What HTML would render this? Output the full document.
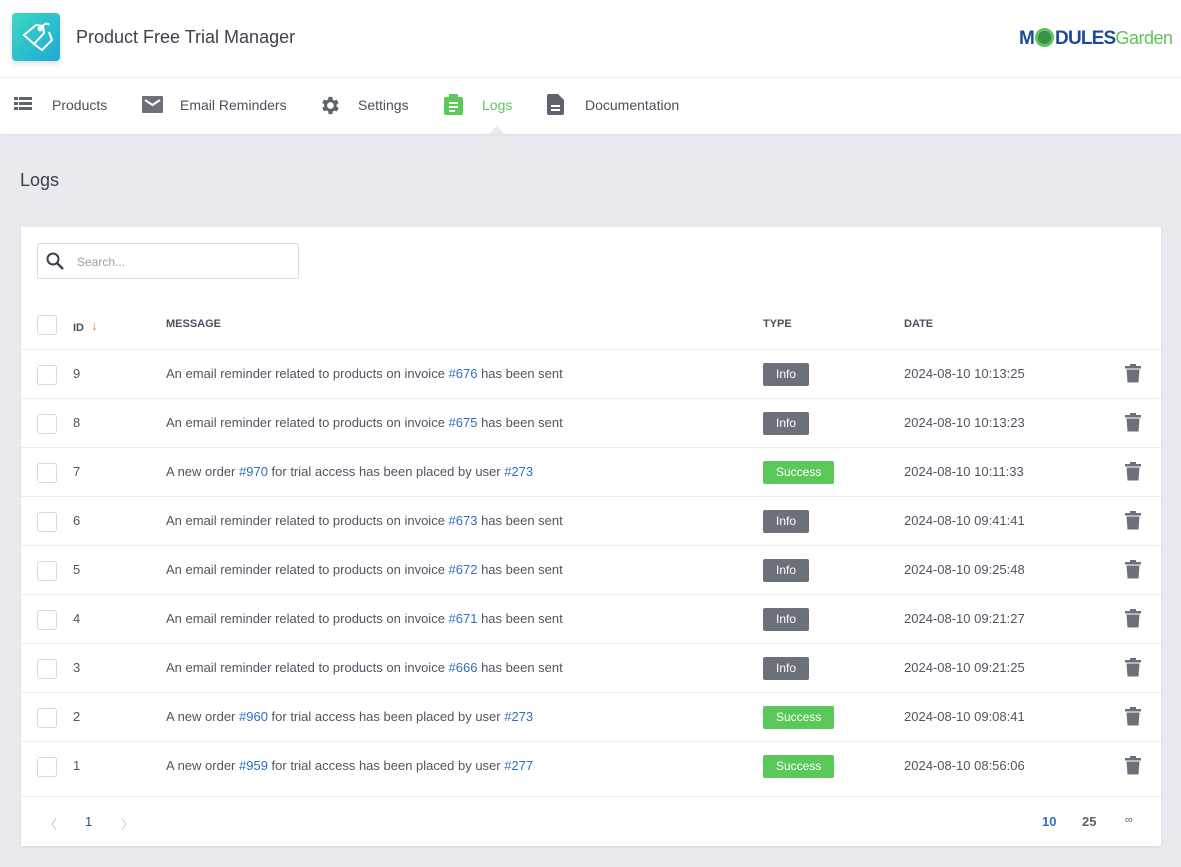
<!DOCTYPE html>
<html><head><meta charset="utf-8"><style>
*{box-sizing:border-box;margin:0;padding:0}
body{width:1181px;height:867px;background:#e9eaef;font-family:"Liberation Sans",sans-serif;color:#505561;overflow:hidden;position:relative}
.top{position:absolute;left:0;top:0;width:1181px;height:78px;background:#fff;border-bottom:1px solid #eceef2}
.logo{position:absolute;left:12px;top:13px;width:48px;height:48px;border-radius:4px;background:linear-gradient(135deg,#3fd7c0,#1ea9d8);box-shadow:0 2px 6px rgba(0,0,0,.15)}
.title{position:absolute;left:76px;top:27px;font-size:18px;color:#3d414b}
.mg{position:absolute;left:1019px;top:27px;font-size:19px;font-weight:bold;color:#1d4b9a;letter-spacing:-0.8px;white-space:nowrap;line-height:22px}
.mg span.g{font-weight:normal;color:#5fc35a;font-size:18px;letter-spacing:-0.5px}
.nav{position:absolute;left:0;top:78px;width:1181px;height:56px;background:#fff;box-shadow:0 1px 3px rgba(0,0,0,.06)}
.ni{position:absolute;top:19px;font-size:14px;color:#4c505b;white-space:nowrap}
.ni svg{position:absolute;top:-1px}
.caret{position:absolute;left:489px;top:126px;width:0;height:0;border-left:8px solid transparent;border-right:8px solid transparent;border-bottom:8px solid #e9eaef}
h2{position:absolute;left:20px;top:170px;font-size:18px;font-weight:normal;color:#3d414b}
.card{position:absolute;left:21px;top:227px;width:1140px;height:619px;background:#fff;box-shadow:0 1px 3px rgba(0,0,0,.08)}
.search{position:absolute;left:16px;top:16px;width:262px;height:36px;border:1px solid #d8dbe1;border-radius:2px}
.search span{position:absolute;left:39px;top:11px;font-size:12px;color:#9a9ea8}
.row{position:absolute;left:0;width:1140px;height:49px;border-top:1px solid #eceef2;font-size:13px}
.row>*{position:absolute}
.cb{left:16px;top:15px;width:20px;height:20px;border:1px solid #d6d9df;border-radius:3px;background:#fff}
.id{left:52px;top:16px}
.msg{left:145px;top:16px}
.msg a{color:#2f6ec5;text-decoration:none}
.bd{left:742px;top:13px;height:23px;line-height:23px;border-radius:2px;color:#fff;font-size:12px;padding:0 13px}
.info{background:#6c7079}
.succ{background:#5bc85a}
.dt{left:883px;top:16px}
.tr{left:1104px;top:14px}
.hd{font-size:11px;font-weight:bold;color:#4c505b}
.foot{position:absolute;left:0;top:569px;width:1140px;height:50px;border-top:1px solid #eceef2;font-size:13px}
.foot span{position:absolute;top:17px}
</style></head><body>
<div class="top">
<div class="logo"><svg width="48" height="48" viewBox="0 0 48 48"><g fill="none" stroke="#fff" stroke-width="2"><path d="M12 22 L24 12 L31 13 L32 20 L22 31 Z"/><path d="M22 31 L30 37 L40 27 L37 19"/><circle cx="28" cy="16" r="1.5"/><path d="M28 16 Q34 8 37 12"/></g></svg></div>
<div class="title">Product Free Trial Manager</div>
<div class="mg">M<span style="display:inline-block;width:19px;height:19px;border:3px solid #5fc35a;border-radius:50%;vertical-align:-3px;background:#3a8f4b;margin:0 1px"></span>DULES<span class="g">Garden</span></div>
</div>
<div class="nav">
<div class="ni" style="left:52px"><svg style="left:-38px" width="18" height="16" viewBox="0 0 18 16" fill="#5f636d"><rect x="0" y="1" width="4" height="3"/><rect x="5" y="1" width="13" height="3"/><rect x="0" y="6" width="4" height="3"/><rect x="5" y="6" width="13" height="3"/><rect x="0" y="11" width="4" height="3"/><rect x="5" y="11" width="13" height="3"/></svg>Products</div>
<div class="ni" style="left:180px"><svg style="left:-38px" width="21" height="17" viewBox="0 0 21 17"><rect width="21" height="17" rx="1" fill="#6c7079"/><path d="M3 4 L10.5 9 L18 4" stroke="#fff" stroke-width="2" fill="none"/></svg>Email Reminders</div>
<div class="ni" style="left:358px"><svg style="left:-40px;top:-3px" width="23" height="23" viewBox="0 0 24 24" fill="#5f636d"><path d="M19.4 13a7.5 7.5 0 000-2l2.1-1.6-2-3.5-2.5 1a7.3 7.3 0 00-1.7-1L15 3h-4l-.4 2.7a7.3 7.3 0 00-1.7 1l-2.5-1-2 3.5L6.6 11a7.5 7.5 0 000 2l-2.1 1.6 2 3.5 2.5-1a7.3 7.3 0 001.7 1L11 21h4l.4-2.7a7.3 7.3 0 001.7-1l2.5 1 2-3.5zM13 15.5a3.5 3.5 0 110-7 3.5 3.5 0 010 7z"/></svg>Settings</div>
<div class="ni" style="left:482px;color:#5bc85a"><svg style="left:-38px;top:-3px" width="19" height="21" viewBox="0 0 19 21"><rect x="0" y="3" width="19" height="18" rx="2" fill="#5bc85a"/><rect x="5" y="0" width="9" height="5" rx="1" fill="#5bc85a"/><path d="M5 9h9M5 13h9M5 17h6" stroke="#fff" stroke-width="2"/></svg>Logs</div>
<div class="ni" style="left:585px"><svg style="left:-38px;top:-3px" width="17" height="21" viewBox="0 0 17 21"><path d="M2 0h9l6 6v13a2 2 0 01-2 2H2a2 2 0 01-2-2V2a2 2 0 012-2z" fill="#5f636d"/><path d="M4 12h9M4 16h9" stroke="#fff" stroke-width="2"/></svg>Documentation</div>
</div>
<div class="caret"></div>
<h2>Logs</h2>
<div class="card">
<div class="search"><svg style="position:absolute;left:8px;top:8px" width="18" height="18" viewBox="0 0 18 18"><circle cx="7" cy="7" r="5.5" stroke="#3d414b" stroke-width="2" fill="none"/><path d="M11 11l6 6" stroke="#3d414b" stroke-width="2.4"/></svg><span>Search...</span></div>
<div class="row" style="top:73px;border-top:none"><div class="cb"></div><div class="id hd" style="top:18px">ID <span style="color:#e0822c;font-weight:normal;font-size:13px;margin-left:4px;vertical-align:1px">↓</span></div><div class="msg hd" style="top:18px">MESSAGE</div><div class="hd" style="left:742px;top:18px">TYPE</div><div class="hd" style="left:883px;top:18px">DATE</div></div>

<div class="row" style="top:122px"><div class="cb"></div><div class="id">9</div><div class="msg">An email reminder related to products on invoice <a>#676</a> has been sent</div><div class="bd info">Info</div><div class="dt">2024-08-10 10:13:25</div><svg class="tr" width="16" height="19" viewBox="0 0 16 19" fill="#6c7079"><rect x="0" y="2" width="16" height="2.5"/><rect x="5" y="0" width="6" height="2"/><path d="M1.5 5.5h13l-1 13h-11z"/></svg></div>
<div class="row" style="top:171px"><div class="cb"></div><div class="id">8</div><div class="msg">An email reminder related to products on invoice <a>#675</a> has been sent</div><div class="bd info">Info</div><div class="dt">2024-08-10 10:13:23</div><svg class="tr" width="16" height="19" viewBox="0 0 16 19" fill="#6c7079"><rect x="0" y="2" width="16" height="2.5"/><rect x="5" y="0" width="6" height="2"/><path d="M1.5 5.5h13l-1 13h-11z"/></svg></div>
<div class="row" style="top:220px"><div class="cb"></div><div class="id">7</div><div class="msg">A new order <a>#970</a> for trial access has been placed by user <a>#273</a></div><div class="bd succ">Success</div><div class="dt">2024-08-10 10:11:33</div><svg class="tr" width="16" height="19" viewBox="0 0 16 19" fill="#6c7079"><rect x="0" y="2" width="16" height="2.5"/><rect x="5" y="0" width="6" height="2"/><path d="M1.5 5.5h13l-1 13h-11z"/></svg></div>
<div class="row" style="top:269px"><div class="cb"></div><div class="id">6</div><div class="msg">An email reminder related to products on invoice <a>#673</a> has been sent</div><div class="bd info">Info</div><div class="dt">2024-08-10 09:41:41</div><svg class="tr" width="16" height="19" viewBox="0 0 16 19" fill="#6c7079"><rect x="0" y="2" width="16" height="2.5"/><rect x="5" y="0" width="6" height="2"/><path d="M1.5 5.5h13l-1 13h-11z"/></svg></div>
<div class="row" style="top:318px"><div class="cb"></div><div class="id">5</div><div class="msg">An email reminder related to products on invoice <a>#672</a> has been sent</div><div class="bd info">Info</div><div class="dt">2024-08-10 09:25:48</div><svg class="tr" width="16" height="19" viewBox="0 0 16 19" fill="#6c7079"><rect x="0" y="2" width="16" height="2.5"/><rect x="5" y="0" width="6" height="2"/><path d="M1.5 5.5h13l-1 13h-11z"/></svg></div>
<div class="row" style="top:367px"><div class="cb"></div><div class="id">4</div><div class="msg">An email reminder related to products on invoice <a>#671</a> has been sent</div><div class="bd info">Info</div><div class="dt">2024-08-10 09:21:27</div><svg class="tr" width="16" height="19" viewBox="0 0 16 19" fill="#6c7079"><rect x="0" y="2" width="16" height="2.5"/><rect x="5" y="0" width="6" height="2"/><path d="M1.5 5.5h13l-1 13h-11z"/></svg></div>
<div class="row" style="top:416px"><div class="cb"></div><div class="id">3</div><div class="msg">An email reminder related to products on invoice <a>#666</a> has been sent</div><div class="bd info">Info</div><div class="dt">2024-08-10 09:21:25</div><svg class="tr" width="16" height="19" viewBox="0 0 16 19" fill="#6c7079"><rect x="0" y="2" width="16" height="2.5"/><rect x="5" y="0" width="6" height="2"/><path d="M1.5 5.5h13l-1 13h-11z"/></svg></div>
<div class="row" style="top:465px"><div class="cb"></div><div class="id">2</div><div class="msg">A new order <a>#960</a> for trial access has been placed by user <a>#273</a></div><div class="bd succ">Success</div><div class="dt">2024-08-10 09:08:41</div><svg class="tr" width="16" height="19" viewBox="0 0 16 19" fill="#6c7079"><rect x="0" y="2" width="16" height="2.5"/><rect x="5" y="0" width="6" height="2"/><path d="M1.5 5.5h13l-1 13h-11z"/></svg></div>
<div class="row" style="top:514px;height:55px"><div class="cb"></div><div class="id">1</div><div class="msg">A new order <a>#959</a> for trial access has been placed by user <a>#277</a></div><div class="bd succ">Success</div><div class="dt">2024-08-10 08:56:06</div><svg class="tr" width="16" height="19" viewBox="0 0 16 19" fill="#6c7079"><rect x="0" y="2" width="16" height="2.5"/><rect x="5" y="0" width="6" height="2"/><path d="M1.5 5.5h13l-1 13h-11z"/></svg></div>

<div class="foot"><span style="left:23px;color:#c4c7cd">〈</span><span style="left:64px;color:#2a4a8a">1</span><span style="left:100px;color:#c4c7cd">〉</span><span style="left:1021px;color:#2f6ec5;font-weight:bold">10</span><span style="left:1061px;color:#5f636d;font-weight:bold">25</span><span style="left:1104px;color:#5f636d;font-size:11px">∞</span></div>
</div>
</body></html>
